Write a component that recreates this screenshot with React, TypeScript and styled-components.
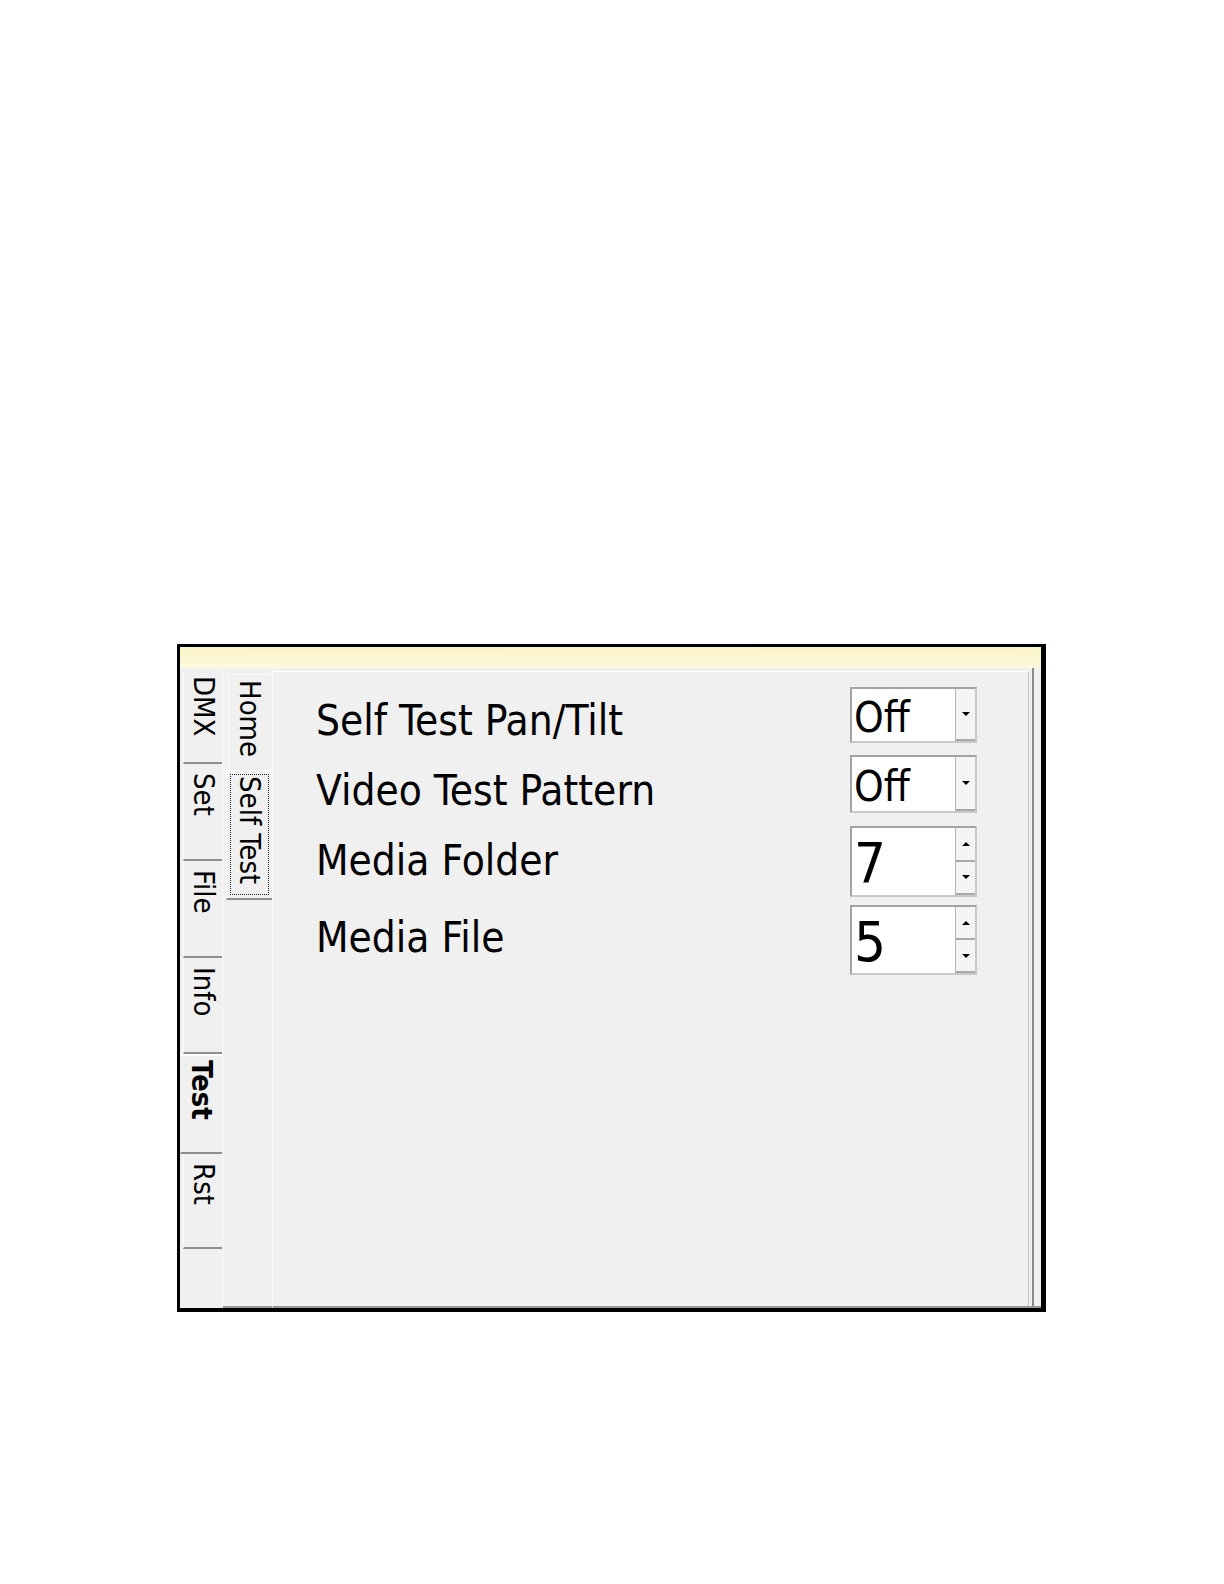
import React from "react";
import styled, { createGlobalStyle } from "styled-components";

const Global = createGlobalStyle`
  html, body { margin: 0; padding: 0; background: #ffffff; }
  body { font-family: "DejaVu Sans", sans-serif; }
`;

const Page = styled.div`
  width: 1224px;
  height: 1584px;
  padding: 644px 0 0 177px;
  box-sizing: border-box;
`;

const Frame = styled.div`
  width: 869px;
  height: 668px;
  border: 3px solid #000;
  border-right-width: 5px;
  border-bottom-width: 4px;
  box-sizing: border-box;
  display: flex;
  flex-direction: column;
  background: #f0f0f0;
`;

const TopStrip = styled.div`
  height: 21px;
  background: linear-gradient(#fbf4c6, #fdf9e0);
  flex: none;
`;

const Body = styled.div`
  flex: 1;
  display: flex;
  min-height: 0;
`;

const SideTabs = styled.div`
  width: 43px;
  flex: none;
  display: flex;
  flex-direction: column;
  padding-top: 4px;
  border-right: 1px solid #fafafa;
  box-sizing: border-box;
`;

const SideTab = styled.div<{ $h: number; $pad: number; $active?: boolean }>`
  height: ${(p) => p.$h}px;
  flex: none;
  box-sizing: border-box;
  margin-left: ${(p) => (p.$active ? 0 : 3)}px;
  border-left: 1px solid ${(p) => (p.$active ? "transparent" : "#fbfbfb")};
  border-top: ${(p) => (p.$active ? "2px solid #ffffff" : "none")};
  border-bottom: 2px solid #8f8f8f;
  display: flex;
  align-items: center;
  justify-content: flex-start;
  padding-top: ${(p) => p.$pad}px;
  writing-mode: vertical-rl;
  font-family: "DejaVu Sans Condensed", "DejaVu Sans", sans-serif;
  font-stretch: condensed;
  font-size: 29px;
  font-weight: ${(p) => (p.$active ? 700 : 400)};
  color: #000;
  line-height: 1;
`;

const SubTabs = styled.div`
  width: 50px;
  flex: none;
  display: flex;
  flex-direction: column;
  padding-top: 6px;
  box-sizing: border-box;
  border-right: 1px solid #fafafa;
  border-bottom: 2px solid #9a9a9a;
`;

const SubTab = styled.div<{ $h: number; $active?: boolean }>`
  height: ${(p) => p.$h}px;
  flex: none;
  box-sizing: border-box;
  margin-left: ${(p) => (p.$active ? 3 : 5)}px;
  margin-right: ${(p) => (p.$active ? 0 : 2)}px;
  border-left: 1px solid #fbfbfb;
  border-top: 1px solid #fbfbfb;
  border-bottom: ${(p) => (p.$active ? "2px solid #8f8f8f" : "none")};
  padding: ${(p) => (p.$active ? "3px" : "0")};
  display: flex;
`;

const SubTabLabel = styled.div<{ $focus?: boolean }>`
  flex: 1;
  display: flex;
  align-items: center;
  justify-content: flex-start;
  padding-top: ${(p) => (p.$focus ? 1 : 4)}px;
  writing-mode: vertical-rl;
  border: 1px dotted ${(p) => (p.$focus ? "#222" : "transparent")};
  font-family: "DejaVu Sans Condensed", "DejaVu Sans", sans-serif;
  font-stretch: condensed;
  font-size: 29px;
  line-height: 1;
  color: #000;
`;

const Content = styled.div`
  flex: 1;
  display: flex;
  border-bottom: 2px solid #9a9a9a;
  padding-right: 12px;
`;

const Panel = styled.div`
  flex: 1;
  border-top: 1px solid #ffffff;
  border-right: 1px solid #c4c4c4;
  margin-top: 3px;
  box-sizing: border-box;
  position: relative;
  &::after {
    content: "";
    position: absolute;
    top: -4px;
    bottom: 0;
    right: -6px;
    width: 2px;
    background: #8c8c8c;
  }
`;

const Grid = styled.div`
  display: grid;
  grid-template-columns: 534px 127px;
  padding: 15px 0 0 43px;
`;

const Label = styled.div<{ $shift: number }>`
  font-family: "DejaVu Sans Condensed", "DejaVu Sans", sans-serif;
  font-stretch: condensed;
  font-size: 42px;
  color: #000;
  align-self: center;
  line-height: 1;
  transform: translateY(${(p) => p.$shift}px);
`;

const Field = styled.div<{ $h: number; $gap: number }>`
  height: ${(p) => p.$h}px;
  margin-bottom: ${(p) => p.$gap}px;
  box-sizing: border-box;
  border: 2px solid #a3a3a3;
  border-right-color: #c9c9c9;
  border-bottom-color: #c9c9c9;
  background: #fff;
  display: flex;
`;

const Value = styled.div<{ $size: number; $drop: number }>`
  flex: 1;
  display: flex;
  align-items: center;
  padding-left: 2px;
  padding-top: ${(p) => p.$drop}px;
  font-family: "DejaVu Sans Condensed", "DejaVu Sans", sans-serif;
  font-stretch: condensed;
  font-size: ${(p) => p.$size}px;
  line-height: 1;
  color: #000;
`;

const Buttons = styled.div`
  width: 19px;
  flex: none;
  display: flex;
  flex-direction: column;
  border-left: 1px solid #b5b5b5;
`;

const Btn = styled.div`
  flex: 1;
  display: flex;
  align-items: center;
  justify-content: center;
  background: #f4f4f4;
  border-bottom: 2px solid #a8a8a8;
`;

const Arrow = ({ up }: { up?: boolean }) => (
  <svg width="8" height="4" viewBox="0 0 8 4">
    <polygon points={up ? "0,4 8,4 4,0" : "0,0 8,0 4,4"} fill="#000" />
  </svg>
);

const sideTabs = [
  { t: "DMX", h: 92, pad: 4 },
  { t: "Set", h: 97, pad: 9 },
  { t: "File", h: 97, pad: 9 },
  { t: "Info", h: 96, pad: 9 },
  { t: "Test", h: 100, pad: 4, active: true },
  { t: "Rst", h: 95, pad: 9 },
];

type Row = {
  label: string;
  value: string;
  kind: "combo" | "spin";
  h: number;
  gap: number;
  size: number;
  shift: number;
  drop: number;
};

const rows: Row[] = [
  { label: "Self Test Pan/Tilt", value: "Off", kind: "combo", h: 56, gap: 12, size: 42, shift: 0, drop: 5 },
  { label: "Video Test Pattern", value: "Off", kind: "combo", h: 58, gap: 13, size: 42, shift: 0, drop: 5 },
  { label: "Media Folder", value: "7", kind: "spin", h: 71, gap: 8, size: 56, shift: -5, drop: 3 },
  { label: "Media File", value: "5", kind: "spin", h: 70, gap: 0, size: 56, shift: -2, drop: 3 },
];

export default function App() {
  return (
    <>
      <Global />
      <Page>
        <Frame>
          <TopStrip />
          <Body>
            <SideTabs>
              {sideTabs.map((s) => (
                <SideTab key={s.t} $h={s.h} $pad={s.pad} $active={s.active}>
                  {s.t}
                </SideTab>
              ))}
            </SideTabs>
            <SubTabs>
              <SubTab $h={96}>
                <SubTabLabel>Home</SubTabLabel>
              </SubTab>
              <SubTab $h={130} $active>
                <SubTabLabel $focus>Self Test</SubTabLabel>
              </SubTab>
            </SubTabs>
            <Content>
              <Panel>
                <Grid>
                  {rows.map((r) => (
                    <React.Fragment key={r.label}>
                      <Label $shift={r.shift}>{r.label}</Label>
                      <Field $h={r.h} $gap={r.gap}>
                        <Value $size={r.size} $drop={r.drop}>
                          {r.value}
                        </Value>
                        <Buttons>
                          {r.kind === "combo" ? (
                            <Btn>
                              <Arrow />
                            </Btn>
                          ) : (
                            <>
                              <Btn>
                                <Arrow up />
                              </Btn>
                              <Btn>
                                <Arrow />
                              </Btn>
                            </>
                          )}
                        </Buttons>
                      </Field>
                    </React.Fragment>
                  ))}
                </Grid>
              </Panel>
            </Content>
          </Body>
        </Frame>
      </Page>
    </>
  );
}
